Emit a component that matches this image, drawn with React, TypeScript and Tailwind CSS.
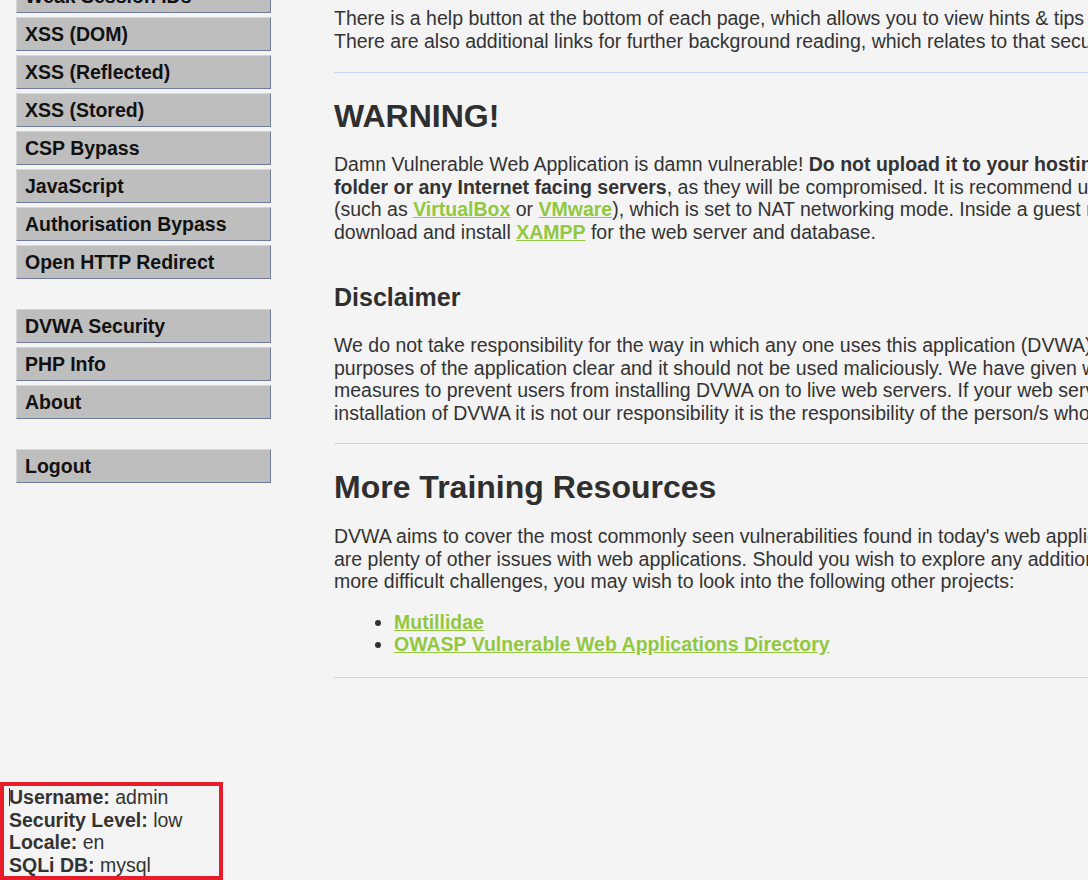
const menuGroups = [
  [
    "Weak Session IDs",
    "XSS (DOM)",
    "XSS (Reflected)",
    "XSS (Stored)",
    "CSP Bypass",
    "JavaScript",
    "Authorisation Bypass",
    "Open HTTP Redirect",
  ],
  ["DVWA Security", "PHP Info", "About"],
  ["Logout"],
];

function Link({ children }: { children: React.ReactNode }) {
  return <a className="font-bold text-[#92c83e] underline decoration-[#92c83e]">{children}</a>;
}

function Line({ children }: { children: React.ReactNode }) {
  return <div className="whitespace-nowrap">{children}</div>;
}

export default function App() {
  return (
    <div className="flex h-[880px] w-[1088px] flex-col overflow-hidden bg-[#f4f4f4] font-['Liberation_Sans',Arial,sans-serif] text-[19.5px] leading-[22.5px] text-[#333]">
      <div className="-mt-[21px] flex min-h-0 flex-1">
        {/* Left: menu */}
        <div className="w-[334px] shrink-0 pl-[16px]">
          {menuGroups.map((group, gi) => (
            <div key={gi} className={`flex flex-col gap-[4px] ${gi > 0 ? "mt-[30px]" : ""}`}>
              {group.map((item) => (
                <div
                  key={item}
                  className="flex h-[34px] w-[255px] items-center border border-t-[#d6d6d6] border-l-[#d6d6d6] border-b-[#6e7c99] border-r-[#6e7c99] bg-[#bebebe] pl-[8px] font-bold text-[#111]"
                >
                  {item}
                </div>
              ))}
            </div>
          ))}
        </div>

        {/* Right: content */}
        <div className="min-w-0 flex-1 overflow-hidden pt-[28px]">
          <Line>
            There is a help button at the bottom of each page, which allows you to view hints &amp; tips for that vulnerability.
          </Line>
          <Line>
            There are also additional links for further background reading, which relates to that security issue.
          </Line>

          <div className="mt-[20px] border-t border-[#c5d7f3]" />

          <h1 className="mt-[25px] text-[32px] leading-[37px] font-bold text-[#2f2f2f]">WARNING!</h1>
          <div className="mt-[18px]">
            <Line>
              Damn Vulnerable Web Application is damn vulnerable! <b>Do not upload it to your hosting provider's public_html</b>
            </Line>
            <Line>
              <b>folder or any Internet facing servers</b>, as they will be compromised. It is recommend using a virtual machine
            </Line>
            <Line>
              (such as <Link>VirtualBox</Link> or <Link>VMware</Link>), which is set to NAT networking mode. Inside a guest machine, you can
            </Line>
            <Line>
              download and install <Link>XAMPP</Link> for the web server and database.
            </Line>
          </div>

          <h2 className="mt-[40px] text-[25px] leading-[29px] font-bold text-[#2f2f2f]">Disclaimer</h2>
          <div className="mt-[22px]">
            <Line>We do not take responsibility for the way in which any one uses this application (DVWA). We have made the</Line>
            <Line>purposes of the application clear and it should not be used maliciously. We have given warnings and taken</Line>
            <Line>measures to prevent users from installing DVWA on to live web servers. If your web server is compromised via an</Line>
            <Line>installation of DVWA it is not our responsibility it is the responsibility of the person/s who uploaded and installed it.</Line>
          </div>

          <div className="mt-[19px] border-t border-[#c5d7f3]" />

          <h1 className="mt-[25px] text-[32px] leading-[37px] font-bold text-[#2f2f2f]">More Training Resources</h1>
          <div className="mt-[19px]">
            <Line>DVWA aims to cover the most commonly seen vulnerabilities found in today's web applications. However there</Line>
            <Line>are plenty of other issues with web applications. Should you wish to explore any additional attack vectors, or want</Line>
            <Line>more difficult challenges, you may wish to look into the following other projects:</Line>
          </div>

          <ul className="mt-[18px] list-disc pl-[60px]">
            <li>
              <Link>Mutillidae</Link>
            </li>
            <li>
              <Link>OWASP Vulnerable Web Applications Directory</Link>
            </li>
          </ul>

          <div className="mt-[21px] border-t border-[#c5d7f3]" />
        </div>
      </div>

      {/* Bottom-left: session info */}
      <div className="h-[98px] w-[223px] shrink-0 border-[4px] border-[#e81d2a] pl-[5px]">
        <div className="flex items-center">
          <span className="-mr-px inline-block h-[18px] w-px bg-[#333]" />
          <span>
            <b>Username:</b> admin
          </span>
        </div>
        <div>
          <b>Security Level:</b> low
        </div>
        <div>
          <b>Locale:</b> en
        </div>
        <div>
          <b>SQLi DB:</b> mysql
        </div>
      </div>
    </div>
  );
}
